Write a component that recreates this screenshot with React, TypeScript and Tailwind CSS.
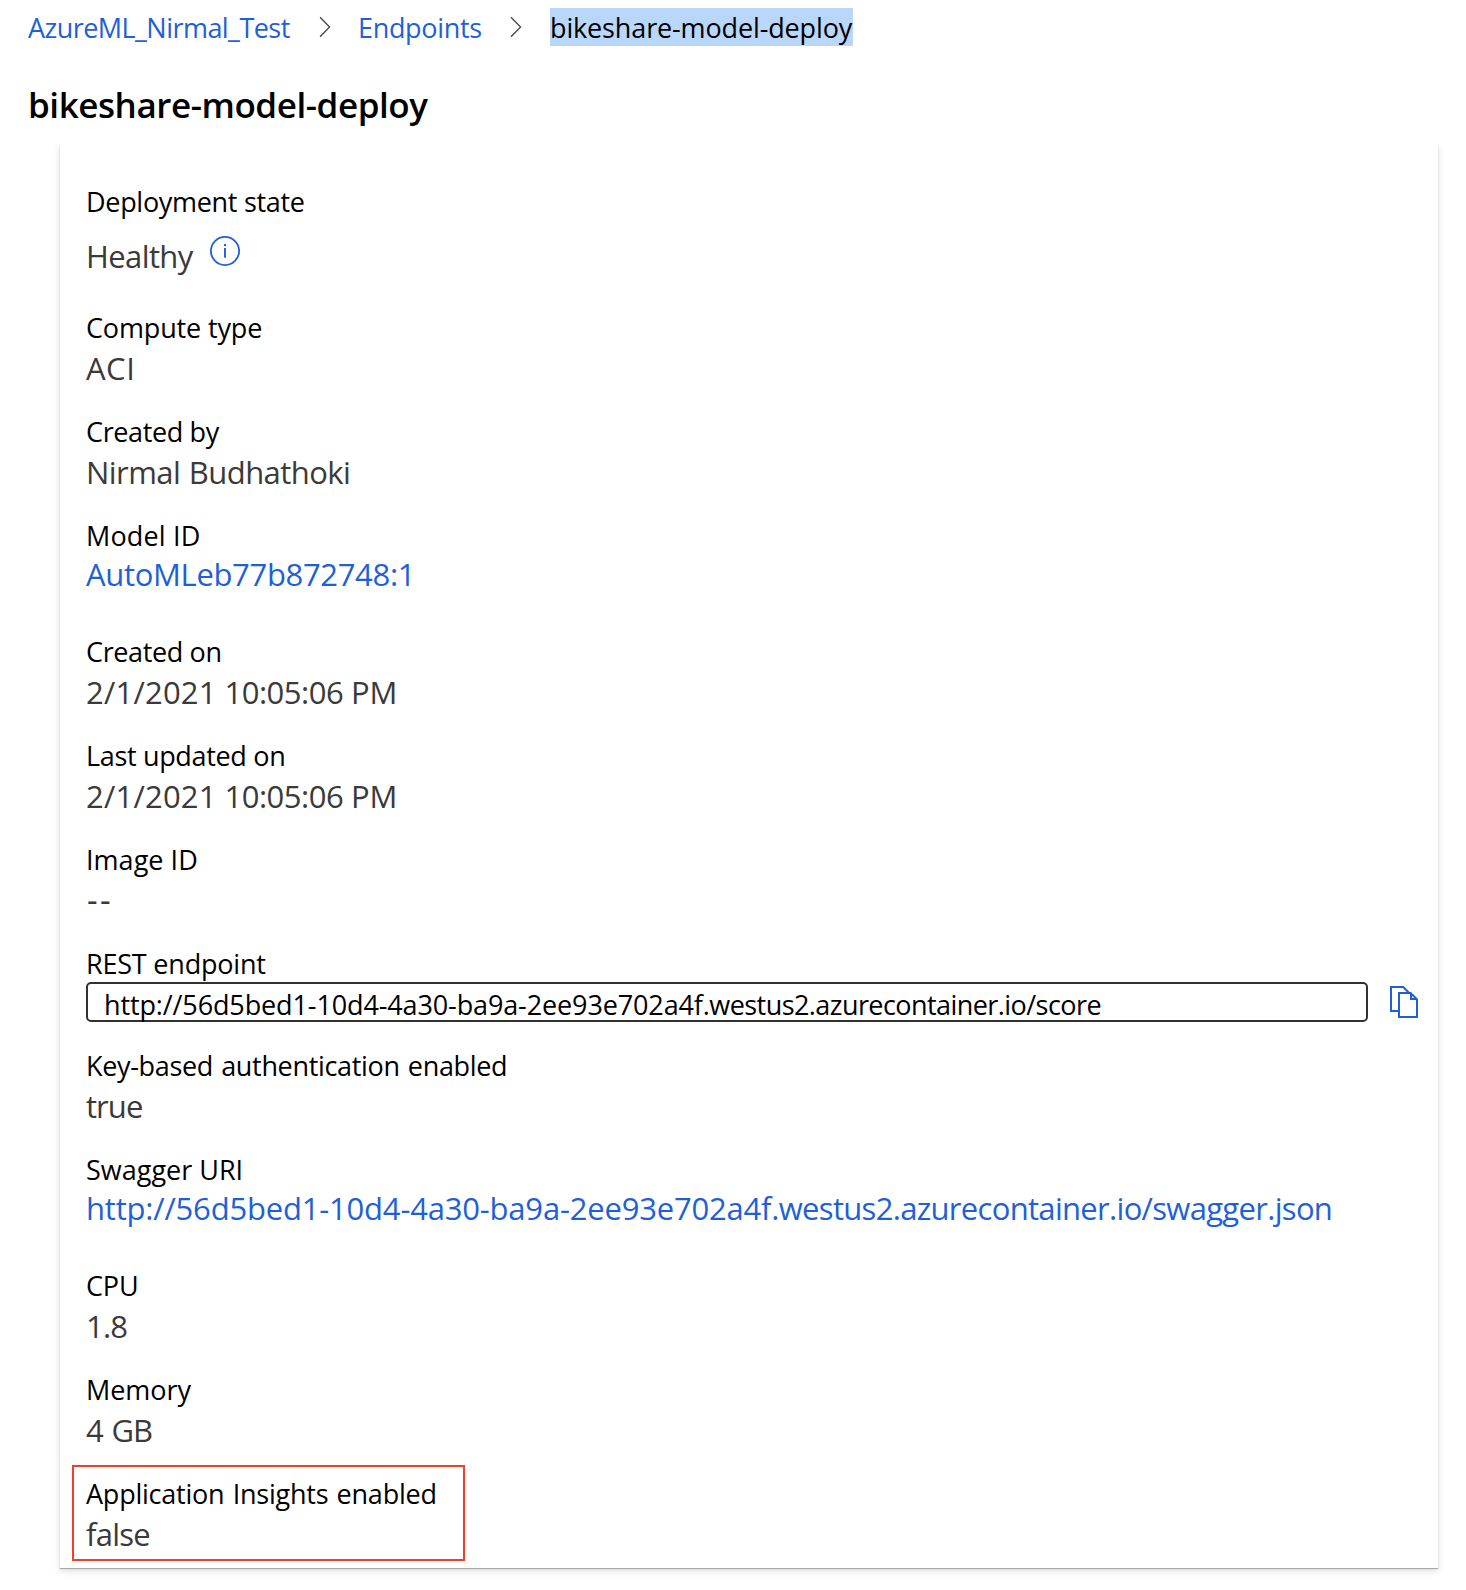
import type { ReactNode } from "react";

function Chevron({ className }: { className: string }) {
  return (
    <svg className={className} width="12" height="22" viewBox="0 0 12 22" fill="none" stroke="#484644" strokeWidth="1.3">
      <path d="M1 1.2 10.6 11 1 20.8" />
    </svg>
  );
}

function InfoIcon() {
  return (
    <svg width="30" height="30" viewBox="0 0 30 30" fill="none" stroke="#1f5fd8">
      <circle cx="15" cy="15" r="14.1" strokeWidth="1.8" />
      <path d="M15 12v9.8" strokeWidth="1.9" />
      <path d="M15 8v2.1" strokeWidth="2.1" />
    </svg>
  );
}

function CopyIcon() {
  return (
    <svg width="28" height="32" viewBox="0 0 28 32" fill="none" stroke="#1f5fd8" strokeWidth="2">
      <path d="M8 25H1V1h12.2l6 6" />
      <path d="M9 7h11.6l6.4 6.4V31H9Z" />
      <path d="M21 7v6h6" />
    </svg>
  );
}

type FieldProps = {
  label: string;
  labelClass?: string;
  height?: string;
  children: ReactNode;
};

function Field({ label, labelClass = "", height = "h-[104px]", children }: FieldProps) {
  return (
    <div className={`flex flex-col items-start ${height}`}>
      <div className={`text-[27px] leading-9 text-black ${labelClass}`}>{label}</div>
      {children}
    </div>
  );
}

function Value({ className = "", children }: { className?: string; children: ReactNode }) {
  return <div className={`text-[31px] leading-[44px] text-[#3b3a39] ${className}`}>{children}</div>;
}

function ValueLink({ className = "", children }: { className?: string; children: ReactNode }) {
  return (
    <a href="#" className={`text-[31px] leading-10 text-[#1f5fd8] ${className}`}>
      {children}
    </a>
  );
}

function Timestamp() {
  return (
    <Value className="tracking-[-0.24px]">
      <span className="tracking-[0.2px]">2/1/2021</span> <span className="tracking-[-0.5px]">10:05:06</span> PM
    </Value>
  );
}

export default function App() {
  return (
    <div className="flex h-[1590px] w-[1466px] flex-col overflow-hidden bg-white font-['Open_Sans','Noto_Sans',sans-serif] whitespace-nowrap">
      <nav className="flex h-[54px] items-start pt-2 pl-[28px] text-[27px] leading-10">
        <a href="#" className="w-[291px] tracking-[-0.54px] text-[#1f5fd8]">AzureML_Nirmal_Test</a>
        <Chevron className="mt-2" />
        <a href="#" className="ml-[27px] w-[152px] tracking-[-0.33px] text-[#1f5fd8]">Endpoints</a>
        <Chevron className="mt-2" />
        <span className="ml-[28px] h-[38px] w-[303px] bg-[#b9d7fb] tracking-[-0.14px] text-black">bikeshare-model-deploy</span>
      </nav>
      <h1 className="h-[90px] pt-[26px] pl-[28px] text-[35px] leading-[50px] font-semibold tracking-[-0.44px] text-black">
        bikeshare-model-deploy
      </h1>

      <div className="flex-1 overflow-hidden px-[28px]">
        <main className="ml-8 h-[1424px] w-[1378px] bg-white pt-10 pl-[26px] shadow-[0_1px_0_#a9a9a9,0_3.2px_7.2px_rgba(0,0,0,0.132),0_0.6px_1.8px_rgba(0,0,0,0.108)]">
          <Field label="Deployment state" labelClass="tracking-[-0.3px]" height="h-[126px]">
            <div className="flex pt-[12px]">
              <Value className="w-[124px] pt-[2px] tracking-[-0.6px]">Healthy</Value>
              <div className="mt-1">
                <InfoIcon />
              </div>
            </div>
          </Field>
          <Field label="Compute type" labelClass="tracking-[-0.14px]">
            <Value className="tracking-[0.5px]">ACI</Value>
          </Field>
          <Field label="Created by" labelClass="tracking-[-0.37px]">
            <Value className="tracking-[-0.55px] [word-spacing:1px]">Nirmal Budhathoki</Value>
          </Field>
          <Field label="Model ID" labelClass="tracking-[0.15px]" height="h-[116px]">
            <ValueLink className="tracking-[-0.33px]">AutoMLeb77b872748:1</ValueLink>
          </Field>
          <Field label="Created on" labelClass="tracking-[-0.37px]">
            <Timestamp />
          </Field>
          <Field label="Last updated on" labelClass="tracking-[-0.33px]">
            <Timestamp />
          </Field>
          <Field label="Image ID" labelClass="tracking-[0.04px]">
            <Value className="pl-px text-[33px] tracking-[2.5px]">--</Value>
          </Field>
          <Field label="REST endpoint" labelClass="tracking-[-0.2px]" height="h-[102px]">
            <div className="flex">
              <div className="h-10 w-[1282px] rounded-[5px] border-2 border-[#323130] pl-4 text-[27px] leading-[41px] tracking-[-0.565px] text-black">
                <span className="tracking-[-0.125px]">http://56d5bed1-10d4-4a30-ba9a-2ee93e702a4f</span>.westus2.azurecontainer.io/score
              </div>
              <button className="mt-1 ml-[22px] h-8 w-7">
                <CopyIcon />
              </button>
            </div>
          </Field>
          <Field label="Key-based authentication enabled" labelClass="tracking-[-0.33px] [word-spacing:1.5px]">
            <Value className="tracking-[-0.95px]">true</Value>
          </Field>
          <Field label="Swagger URI" height="h-[116px]">
            <ValueLink className="tracking-[-0.69px]">
              <span className="tracking-[-0.195px]">http://56d5bed1-10d4-4a30-ba9a-2ee93e702a4f</span>.westus2.azurecontainer.io/swagger.json
            </ValueLink>
          </Field>
          <Field label="CPU" labelClass="tracking-[-0.15px]">
            <Value className="tracking-[-0.8px]">1.8</Value>
          </Field>
          <Field label="Memory" labelClass="tracking-[-0.05px]" height="h-[93px]">
            <Value className="tracking-[-1.1px] [word-spacing:2px]">4 GB</Value>
          </Field>
          <div className="-ml-[14px] h-24 w-[393px] border-2 border-[#ef4129] pt-[9px] pl-3">
            <Field label="Application Insights enabled" labelClass="tracking-[-0.23px] [word-spacing:1.5px]" height="h-20">
              <Value className="tracking-[-0.75px]">false</Value>
            </Field>
          </div>
        </main>
      </div>
    </div>
  );
}
